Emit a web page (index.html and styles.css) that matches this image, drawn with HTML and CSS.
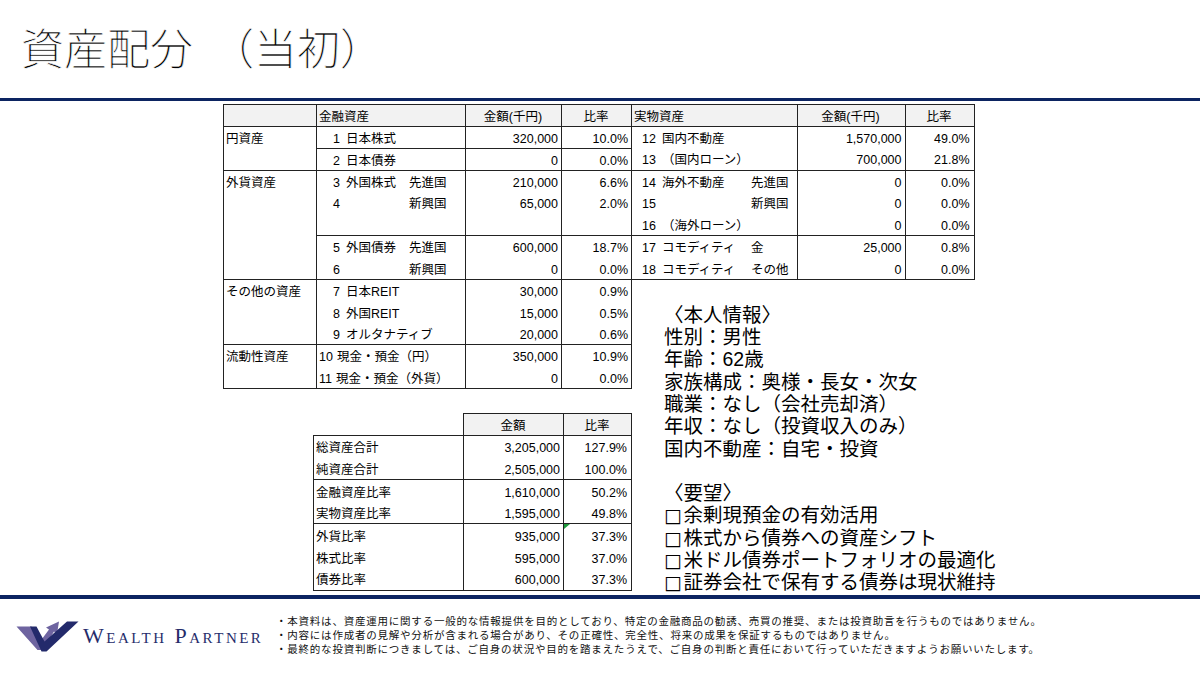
FILE: index.html
```html
<!DOCTYPE html>
<html lang="ja">
<head>
<meta charset="utf-8">
<title>資産配分（当初）</title>
<link rel="stylesheet" href="styles.css">
</head>
<body>
<div class="page">
  <header class="head">
    <h1 class="title">資産配分<span class="paren">（当初）</span></h1>
  </header>
  <main class="content">
    <div class="col-left">
      <table class="tbl main-l">
        <colgroup><col class="c1"><col class="c2"><col class="c3"><col class="c4"></colgroup>
        <tr class="hd"><td></td><td>金融資産</td><td class="ctr">金額(千円)</td><td class="ctr">比率</td></tr>
        <tr class="top"><td rowspan="2" class="grp">円資産</td><td><span class="no1">1</span>日本株式</td><td class="num">320,000</td><td class="num">10.0%</td></tr>
        <tr><td class="bt"><span class="no1">2</span>日本債券</td><td class="num bt">0</td><td class="num bt">0.0%</td></tr>
        <tr class="top"><td rowspan="5" class="grp">外貨資産</td><td><span class="lb"><span class="no1">3</span>外国株式</span>先進国</td><td class="num">210,000</td><td class="num">6.6%</td></tr>
        <tr><td><span class="lb"><span class="no1">4</span></span>新興国</td><td class="num">65,000</td><td class="num">2.0%</td></tr>
        <tr><td></td><td></td><td></td></tr>
        <tr><td class="bt"><span class="lb"><span class="no1">5</span>外国債券</span>先進国</td><td class="num bt">600,000</td><td class="num bt">18.7%</td></tr>
        <tr><td><span class="lb"><span class="no1">6</span></span>新興国</td><td class="num">0</td><td class="num">0.0%</td></tr>
        <tr class="top"><td rowspan="3" class="grp">その他の資産</td><td><span class="no1">7</span>日本REIT</td><td class="num">30,000</td><td class="num">0.9%</td></tr>
        <tr><td><span class="no1">8</span>外国REIT</td><td class="num">15,000</td><td class="num">0.5%</td></tr>
        <tr><td><span class="no1">9</span>オルタナティブ</td><td class="num">20,000</td><td class="num">0.6%</td></tr>
        <tr class="top"><td rowspan="2" class="grp bb">流動性資産</td><td><span class="no2">10</span>現金・預金（円）</td><td class="num">350,000</td><td class="num">10.9%</td></tr>
        <tr><td><span class="no2">11</span>現金・預金（外貨）</td><td class="num">0</td><td class="num">0.0%</td></tr>
      </table>

      <table class="tbl summary">
        <colgroup><col class="s1"><col class="s2"><col class="s3"></colgroup>
        <tr class="hd"><td class="blank"></td><td class="ctr">金額</td><td class="ctr">比率</td></tr>
        <tr class="top"><td>総資産合計</td><td class="num">3,205,000</td><td class="num">127.9%</td></tr>
        <tr><td>純資産合計</td><td class="num">2,505,000</td><td class="num">100.0%</td></tr>
        <tr class="top"><td>金融資産比率</td><td class="num">1,610,000</td><td class="num">50.2%</td></tr>
        <tr><td>実物資産比率</td><td class="num">1,595,000</td><td class="num">49.8%</td></tr>
        <tr class="top"><td>外貨比率</td><td class="num">935,000</td><td class="num flag">37.3%</td></tr>
        <tr><td>株式比率</td><td class="num">595,000</td><td class="num">37.0%</td></tr>
        <tr><td>債券比率</td><td class="num">600,000</td><td class="num">37.3%</td></tr>
      </table>
    </div>

    <div class="col-right">
      <table class="tbl main-r">
        <colgroup><col class="r1"><col class="r2"><col class="r3"></colgroup>
        <tr class="hd"><td>実物資産</td><td class="ctr">金額(千円)</td><td class="ctr">比率</td></tr>
        <tr class="top"><td><span class="nr">12</span>国内不動産</td><td class="num">1,570,000</td><td class="num">49.0%</td></tr>
        <tr><td><span class="nr">13</span>（国内ローン）</td><td class="num">700,000</td><td class="num">21.8%</td></tr>
        <tr class="top"><td><span class="lb"><span class="nr">14</span>海外不動産</span>先進国</td><td class="num">0</td><td class="num">0.0%</td></tr>
        <tr><td><span class="lb"><span class="nr">15</span></span>新興国</td><td class="num">0</td><td class="num">0.0%</td></tr>
        <tr><td><span class="nr">16</span>（海外ローン）</td><td class="num">0</td><td class="num">0.0%</td></tr>
        <tr class="top"><td><span class="lb"><span class="nr">17</span>コモディティ</span>金</td><td class="num">25,000</td><td class="num">0.8%</td></tr>
        <tr><td><span class="lb"><span class="nr">18</span>コモディティ</span>その他</td><td class="num">0</td><td class="num">0.0%</td></tr>
      </table>

      <div class="info">
        <p>〈本人情報〉</p>
        <p>性別：男性</p>
        <p>年齢：62歳</p>
        <p>家族構成：奥様・長女・次女</p>
        <p>職業：なし（会社売却済）</p>
        <p>年収：なし（投資収入のみ）</p>
        <p>国内不動産：自宅・投資</p>
        <p class="gap">〈要望〉</p>
        <p><span class="box">□</span>余剰現預金の有効活用</p>
        <p><span class="box">□</span>株式から債券への資産シフト</p>
        <p><span class="box">□</span>米ドル債券ポートフォリオの最適化</p>
        <p><span class="box">□</span>証券会社で保有する債券は現状維持</p>
      </div>
    </div>
  </main>
  <footer class="foot">
    <div class="brand">
      <svg class="mark" width="66" height="34" viewBox="14 619 66 34" aria-hidden="true">
        <polygon fill="#6e64a0" points="16.5,626.5 31.5,626.5 40.5,641 49,629.5 46,627.5 59,621.5 57,634 54,631.5 42.5,650 37.5,650"/>
        <polygon fill="#232a6b" points="30,626.5 36.5,626.5 44.5,641.5 67,621.5 78.5,621.5 46.5,651.5 41.5,651.5"/>
      </svg>
      <span class="wordmark">Wealth Partner</span>
    </div>
    <div class="disclaimer">
      <p>・本資料は、資産運用に関する一般的な情報提供を目的としており、特定の金融商品の勧誘、売買の推奨、または投資助言を行うものではありません。</p>
      <p>・内容には作成者の見解や分析が含まれる場合があり、その正確性、完全性、将来の成果を保証するものではありません。</p>
      <p>・最終的な投資判断につきましては、ご自身の状況や目的を踏まえたうえで、ご自身の判断と責任において行っていただきますようお願いいたします。</p>
    </div>
  </footer>
</div>
</body>
</html>
```

FILE: styles.css
```css
html, body {
  margin: 0;
  padding: 0;
}
body {
  width: 1200px;
  height: 675px;
  overflow: hidden;
  background: #fff;
  color: #000;
  font-family: "Noto Sans CJK JP", "Noto Sans", sans-serif;
}
.page {
  display: flex;
  flex-direction: column;
  height: 675px;
}
.head {
  height: 98px;
  border-bottom: 3px solid #0c2461;
  flex: none;
}
.title {
  margin: 0;
  padding: 25px 0 0 21px;
  font-size: 43px;
  line-height: 43px;
  font-weight: 300;
  color: #000;
  -webkit-text-stroke: 0.6px #fff;
}
.title .paren {
  margin-left: 18px;
}
.content {
  height: 494px;
  flex: none;
  box-sizing: border-box;
  padding: 3px 0 0 223px;
  display: flex;
  align-items: flex-start;
}
.col-left {
  display: flex;
  flex-direction: column;
  align-items: flex-start;
}
.col-right {
  display: flex;
  flex-direction: column;
  align-items: flex-start;
}

/* tables */
.tbl {
  border-collapse: collapse;
  table-layout: fixed;
  font-family: "Liberation Sans", "Noto Sans CJK JP", sans-serif;
  font-size: 12.5px;
  line-height: 16px;
}
.tbl tr { height: 21.85px; }
.tbl td {
  border-left: 1px solid #222;
  border-right: 1px solid #222;
  padding: 3px 3px 0 2px;
  white-space: nowrap;
  overflow: hidden;
  vertical-align: middle;
}
.tbl .hd td {
  background: #f2f2f2;
  border-top: 1px solid #222;
  border-bottom: 1px solid #222;
}
.tbl tr.top td,
.tbl td.bt { border-top: 1px solid #222; }
.tbl tr:last-child td,
.tbl td.bb { border-bottom: 1px solid #222; }
.tbl td.num { text-align: right; }
.tbl td.ctr { text-align: center; }
.tbl td.grp { vertical-align: top; padding-top: 4px; }

.main-l { width: 408px; }
.main-l .c1 { width: 93px; }
.main-l .c2 { width: 149px; }
.main-l .c3 { width: 96px; }
.main-l .c4 { width: 70px; }

.main-r { width: 342px; }
.main-r .r1 { width: 165px; }
.main-r .r2 { width: 108px; }
.main-r .r3 { width: 69px; }
.main-r td:first-child { border-left: none; padding-left: 10px; }
.main-r .hd td:first-child { padding-left: 2px; }
.main-r td.num:last-child { padding-right: 4px; }

.no1 {
  display: inline-block;
  padding-left: 14px;
  margin-right: 6px;
}
.no2 {
  display: inline-block;
  margin-right: 4px;
}
.nr {
  display: inline-block;
  margin-right: 6px;
}
.lb { display: inline-block; }
.main-l .lb { width: 90px; }
.main-r .lb { width: 109px; }

.summary {
  width: 318px;
  margin: 24px 0 0 90px;
}
.summary tr { height: 22.1px; }
.summary .s1 { width: 150px; }
.summary .s2 { width: 100px; }
.summary .s3 { width: 68px; }
.summary td.num:last-child { padding-right: 4px; }
.summary .hd td.blank {
  background: none;
  border-top: none;
  border-left: none;
}
.summary td.flag { position: relative; }
.summary td.flag::before {
  content: "";
  position: absolute;
  left: 0;
  top: 0;
  border-top: 5px solid #1e9b3c;
  border-right: 6px solid transparent;
}

/* info */
.info {
  margin-top: 24px;
  padding-left: 32px;
  font-family: "Liberation Sans", "Noto Sans CJK JP", sans-serif;
  font-size: 19.5px;
  line-height: 22.3px;
}
.info p {
  margin: 0;
  white-space: nowrap;
}
.info p.gap { margin-top: 22.3px; }
.info .box {
  display: inline-block;
  width: 19.5px;
  font-family: "DejaVu Sans", sans-serif;
  font-size: 19px;
  line-height: 22.3px;
}

/* footer */
.foot {
  flex: 1;
  border-top: 4px solid #0c2461;
  display: flex;
  align-items: flex-start;
  padding-top: 15px;
  box-sizing: border-box;
}
.brand {
  width: 276px;
  box-sizing: border-box;
  padding-left: 14px;
  margin-top: 5px;
  display: flex;
  align-items: center;
  flex: none;
}
.mark { display: block; flex: none; }
.wordmark {
  margin-left: 3px;
  font-family: "Liberation Serif", "DejaVu Serif", serif;
  font-variant: small-caps;
  font-size: 22px;
  line-height: 24px;
  letter-spacing: 2.5px;
  color: #262c6a;
  white-space: nowrap;
}
.disclaimer {
  font-size: 10.5px;
  line-height: 14px;
  letter-spacing: 0.78px;
  color: #111;
}
.disclaimer p {
  margin: 0;
  white-space: nowrap;
}
```
